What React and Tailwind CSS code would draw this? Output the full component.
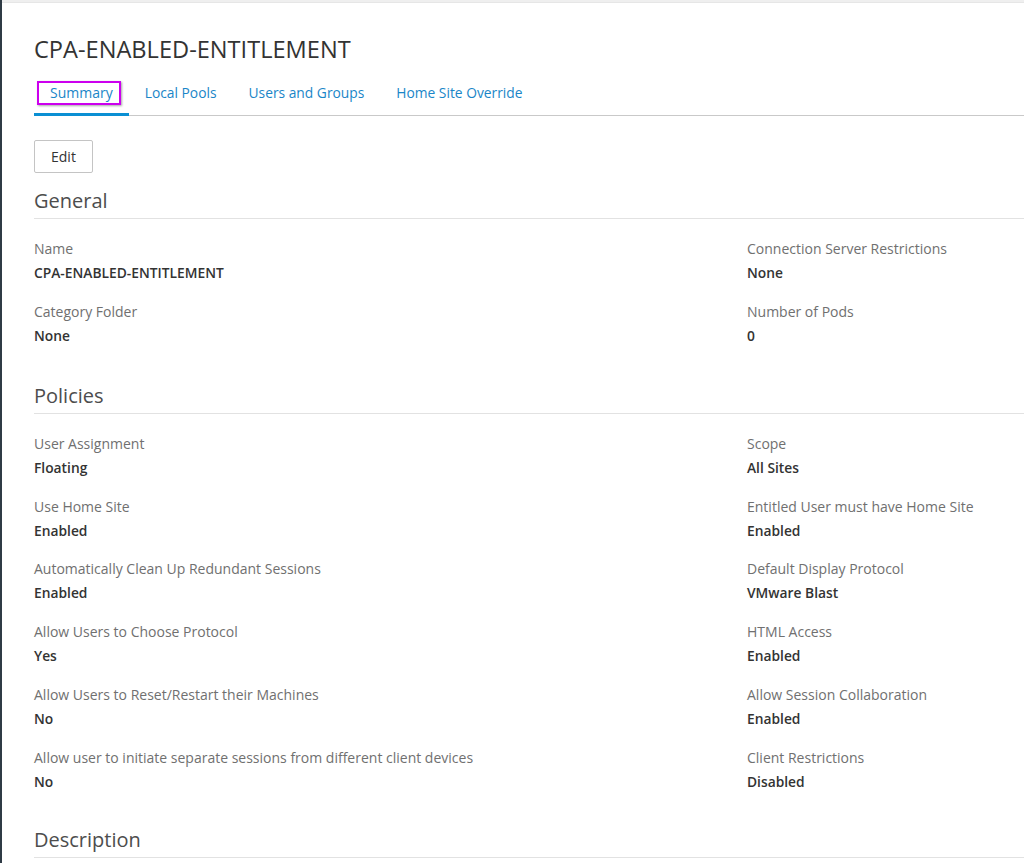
import React from "react";

const general = [
  ["Name", "CPA-ENABLED-ENTITLEMENT", "Connection Server Restrictions", "None"],
  ["Category Folder", "None", "Number of Pods", "0"],
];

const policies = [
  ["User Assignment", "Floating", "Scope", "All Sites"],
  ["Use Home Site", "Enabled", "Entitled User must have Home Site", "Enabled"],
  ["Automatically Clean Up Redundant Sessions", "Enabled", "Default Display Protocol", "VMware Blast"],
  ["Allow Users to Choose Protocol", "Yes", "HTML Access", "Enabled"],
  ["Allow Users to Reset/Restart their Machines", "No", "Allow Session Collaboration", "Enabled"],
  ["Allow user to initiate separate sessions from different client devices", "No", "Client Restrictions", "Disabled"],
];

const tabs = ["Summary", "Local Pools", "Users and Groups", "Home Site Override"];

function Field({ label, value }) {
  return (
    <div>
      <div className="text-[14px] leading-[20px] text-[#707070]">{label}</div>
      <div className="mt-[4px] text-[13.8px] leading-[20px] font-semibold text-[#333]">{value}</div>
    </div>
  );
}

function Section({ title, rows, className }) {
  return (
    <div className={className}>
      <h2 className="text-[20px] leading-[28px] pb-[3px] text-[#4d4d4d] border-b border-[#e2e2e2]">
        {title}
      </h2>
      {rows && (
        <div className="mt-[20px] grid grid-cols-[713px_1fr] gap-y-[18.8px]">
          {rows.map((r) => (
            <React.Fragment key={r[0]}>
              <Field label={r[0]} value={r[1]} />
              <Field label={r[2]} value={r[3]} />
            </React.Fragment>
          ))}
        </div>
      )}
    </div>
  );
}

export default function App() {
  return (
    <div
      className="w-[1024px] h-[863px] overflow-hidden bg-white flex"
      style={{ fontFamily: '"Open Sans", "Liberation Sans", sans-serif' }}
    >
      <div className="w-[2px] shrink-0 bg-[#2f3b45]" />
      <div className="flex-1 flex flex-col">
        <div className="h-[3px] bg-[#efefef] border-b border-[#e6e6e6]" />
        <div className="pl-[32px]">
          <h1 className="mt-[30px] text-[23.6px] leading-[32px] text-[#333]">
            CPA-ENABLED-ENTITLEMENT
          </h1>
          <div className="mt-[6px] flex border-b border-[#c9c9c9]">
            {tabs.map((t, i) => (
              <div
                key={t}
                className={
                  i === 0
                    ? "relative px-4 pt-[12px] pb-[9px] -mb-[1px] text-[14px] leading-[20px] text-[#1a86c8] border-b-[3px] border-[#0a8fd3]"
                    : "px-4 pt-[12px] pb-[12px] text-[13.8px] leading-[20px] text-[#1a86c8]"
                }
              >
                {t}
                {i === 0 && (
                  <span className="absolute left-[3px] top-[10px] w-[84px] h-[24px] border-2 border-[#cc00ee] shadow-[1px_1px_2px_rgba(0,0,0,0.35)]" />
                )}
              </div>
            ))}
          </div>
          <button className="mt-[24px] h-[33px] px-[16px] border border-[#c4c4c4] rounded-[2px] text-[14px] text-[#333] bg-white">
            Edit
          </button>
          <Section title="General" rows={general} className="mt-[14px]" />
          <Section title="Policies" rows={policies} className="mt-[36px]" />
          <Section title="Description" className="mt-[34px]" />
        </div>
      </div>
    </div>
  );
}
